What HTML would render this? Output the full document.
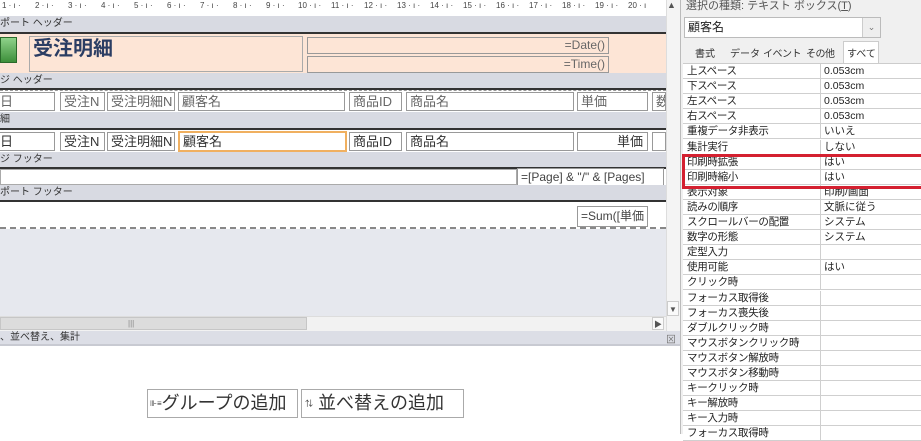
<!DOCTYPE html>
<html><head><meta charset="utf-8"><style>
*{margin:0;padding:0;box-sizing:border-box}
body{width:921px;height:434px;overflow:hidden;background:#fff;font-family:"Liberation Sans","Noto Sans CJK JP",sans-serif;position:relative;color:#333}
.a{position:absolute}
.bar{position:absolute;left:0;width:666px;height:16px;background:#d8dae2;font-size:10px;color:#333;line-height:15px;padding-left:0;border-bottom:2px solid #333}
.box{position:absolute;border:1px solid #999;background:#fff;font-size:13px;color:#666;line-height:18px;padding-left:3px;white-space:nowrap;overflow:hidden}
.d{color:#333}
.row{position:absolute;left:683px;width:238px;height:15.1px;border-bottom:1px solid #cfcfcf;font-size:10.5px;line-height:14px;color:#222;background:#fff;white-space:nowrap}
.row span{position:absolute;left:4px;letter-spacing:-0.3px}
.row b{position:absolute;left:137px;font-weight:normal;border-left:1px solid #cfcfcf;height:15px;padding-left:3px;top:0}
.r{position:absolute;top:0;font-size:8px;color:#444;line-height:11px}
</style></head><body>
<!-- ruler -->
<div class="a" style="left:0;top:0;width:666px;height:14px;background:#fff">
<span class="r" style="left:2px">1 · ı ·</span><span class="r" style="left:35px">2 · ı ·</span><span class="r" style="left:68px">3 · ı ·</span><span class="r" style="left:101px">4 · ı ·</span><span class="r" style="left:134px">5 · ı ·</span><span class="r" style="left:167px">6 · ı ·</span><span class="r" style="left:200px">7 · ı ·</span><span class="r" style="left:233px">8 · ı ·</span><span class="r" style="left:266px">9 · ı ·</span><span class="r" style="left:298px">10 · ı ·</span><span class="r" style="left:331px">11 · ı ·</span><span class="r" style="left:364px">12 · ı ·</span><span class="r" style="left:397px">13 · ı ·</span><span class="r" style="left:430px">14 · ı ·</span><span class="r" style="left:463px">15 · ı ·</span><span class="r" style="left:496px">16 · ı ·</span><span class="r" style="left:529px">17 · ı ·</span><span class="r" style="left:562px">18 · ı ·</span><span class="r" style="left:595px">19 · ı ·</span><span class="r" style="left:628px">20 · ı</span>
</div>
<!-- sections -->
<div class="bar" style="top:16px;height:18px">ポート ヘッダー</div>
<div class="a" style="left:0;top:34px;width:666px;height:39px;background:#fde5d6"></div>
<div class="a" style="left:0;top:37px;width:17px;height:26px;background:linear-gradient(#8fd28a,#3d8f3a);border:1px solid #2a6a2a"></div>
<div class="box" style="left:29px;top:36px;width:274px;height:36px;background:#fde5d6;font-size:20px;line-height:24px;color:#2b3d63;font-weight:bold;border-color:#aaa">受注明細</div>
<div class="box" style="left:307px;top:37px;width:302px;height:17px;background:#fde5d6;text-align:right;padding-right:3px;line-height:15px;font-size:12px">=Date()</div>
<div class="box" style="left:307px;top:56px;width:302px;height:17px;background:#fde5d6;text-align:right;padding-right:3px;line-height:15px;font-size:12px">=Time()</div>
<div class="bar" style="top:73px;height:17px">ジ ヘッダー</div>
<div class="a" style="left:0;top:90px;width:666px;height:22px;background:#fff;border-top:1px dashed #999"></div>
<div class="box" style="left:-4px;top:92px;width:59px;height:19px">日</div>
<div class="box" style="left:60px;top:92px;width:45px;height:19px">受注N</div>
<div class="box" style="left:107px;top:92px;width:68px;height:19px">受注明細N</div>
<div class="box" style="left:178px;top:92px;width:167px;height:19px">顧客名</div>
<div class="box" style="left:349px;top:92px;width:53px;height:19px">商品ID</div>
<div class="box" style="left:406px;top:92px;width:168px;height:19px">商品名</div>
<div class="box" style="left:577px;top:92px;width:71px;height:19px">単価</div>
<div class="box" style="left:652px;top:92px;width:14px;height:19px">数</div>
<div class="bar" style="top:112px;height:18px">細</div>
<div class="a" style="left:0;top:130px;width:666px;height:23px;background:#fff"></div>
<div class="box d" style="left:-4px;top:132px;width:59px;height:19px">日</div>
<div class="box d" style="left:60px;top:132px;width:45px;height:19px">受注N</div>
<div class="box d" style="left:107px;top:132px;width:68px;height:19px">受注明細N</div>
<div class="box d" style="left:178px;top:131px;width:169px;height:21px;border:2px solid #f0b060">顧客名</div>
<div class="box d" style="left:349px;top:132px;width:53px;height:19px">商品ID</div>
<div class="box d" style="left:406px;top:132px;width:168px;height:19px">商品名</div>
<div class="box d" style="left:577px;top:132px;width:71px;height:19px;text-align:right;padding-right:4px">単価</div>
<div class="box d" style="left:652px;top:132px;width:14px;height:19px"></div>
<div class="bar" style="top:152px;height:17px">ジ フッター</div>
<div class="a" style="left:0;top:169px;width:666px;height:16px;background:#fff"></div>
<div class="box" style="left:0;top:169px;width:517px;height:16px;border-color:#aaa"></div>
<div class="box" style="left:517px;top:168px;width:147px;height:18px;font-size:12px;line-height:16px;color:#444">=[Page] &amp; "/" &amp; [Pages]</div>
<div class="bar" style="top:185px;height:17px">ポート フッター</div>
<div class="a" style="left:0;top:202px;width:666px;height:27px;background:#fff;border-bottom:2px dashed #888"></div>
<div class="box" style="left:577px;top:206px;width:71px;height:21px;font-size:12px;color:#444">=Sum([単価</div>
<div class="a" style="left:0;top:229px;width:666px;height:88px;background:#e6e8ee"></div>
<!-- h scrollbar -->
<div class="a" style="left:0;top:316px;width:666px;height:15px;background:#f2f2f2;border-top:1px solid #ddd"></div>
<div class="a" style="left:0;top:317px;width:307px;height:13px;background:#dcdcdc;border:1px solid #c6c6c6"></div>
<div class="a" style="left:128px;top:319px;font-size:8px;color:#888">|||</div>
<div class="a" style="left:652px;top:317px;width:12px;height:13px;font-size:8px;color:#555;line-height:13px;text-align:center;background:#fafafa;border:1px solid #ccc">▶</div>
<!-- v scrollbar -->
<div class="a" style="left:666px;top:0;width:14px;height:331px;background:#f4f4f4;border-left:1px solid #ddd"></div>
<div class="a" style="left:667px;top:0;font-size:9px;color:#555">▲</div>
<div class="a" style="left:667px;top:301px;width:12px;height:15px;font-size:8px;color:#555;line-height:15px;text-align:center;background:#fafafa;border:1px solid #ccc">▼</div>
<!-- sort pane -->
<div class="a" style="left:0;top:331px;width:680px;height:15px;background:#dcdee6;font-size:10px;line-height:14px;border-bottom:2px solid #c8cad2">、並べ替え、集計</div>
<div class="a" style="left:666px;top:331px;font-size:10px;color:#777">⊠</div>
<div class="a" style="left:147px;top:389px;width:151px;height:29px;border:1px solid #aaa;background:#fff;font-size:18px;line-height:27px;padding-left:2px;color:#333;white-space:nowrap;overflow:hidden"><span style="font-size:8px;vertical-align:3px">⊪≡</span>グループの追加</div>
<div class="a" style="left:301px;top:389px;width:163px;height:29px;border:1px solid #aaa;background:#fff;font-size:18px;line-height:27px;padding-left:3px;color:#333;white-space:nowrap;overflow:hidden"><span style="font-size:8px;vertical-align:3px">⇅</span> 並べ替えの追加</div>
<!-- property panel -->
<div class="a" style="left:680px;top:0;width:241px;height:434px;background:#f0f0f0;border-left:1px solid #bbb"></div>
<div class="a" style="left:686px;top:-3px;font-size:11px;color:#555">選択の種類: テキスト ボックス(<u>T</u>)</div>
<div class="a" style="left:684px;top:17px;width:197px;height:21px;background:#fff;border:1px solid #bbb;font-size:12px;line-height:19px;padding-left:3px;color:#222">顧客名</div>
<div class="a" style="left:862px;top:18px;width:18px;height:19px;background:#eee;border-left:1px solid #ccc;font-size:9px;color:#777;text-align:center;line-height:19px">⌄</div>
<div class="a" style="left:843px;top:41px;width:36px;height:23px;background:#fff;border:1px solid #ccc;border-bottom:none"></div>
<div class="a" style="left:695px;top:45px;font-size:10px;color:#333">書式</div>
<div class="a" style="left:730px;top:45px;font-size:10px;color:#333">データ</div>
<div class="a" style="left:763px;top:45px;font-size:10px;color:#333;letter-spacing:-0.5px">イベント</div>
<div class="a" style="left:806px;top:45px;font-size:10px;color:#333;letter-spacing:-0.5px">その他</div>
<div class="a" style="left:847px;top:45px;font-size:10px;color:#333">すべて</div>
<div class="a" style="left:683px;top:63px;width:238px;height:371px;background:#fff;border-top:1px solid #ccc"></div>
<div class="row" style="top:64px"><span>上スペース</span><b>0.053cm</b></div>
<div class="row" style="top:79.1px"><span>下スペース</span><b>0.053cm</b></div>
<div class="row" style="top:94.2px"><span>左スペース</span><b>0.053cm</b></div>
<div class="row" style="top:109.3px"><span>右スペース</span><b>0.053cm</b></div>
<div class="row" style="top:124.4px"><span>重複データ非表示</span><b>いいえ</b></div>
<div class="row" style="top:139.5px"><span>集計実行</span><b>しない</b></div>
<div class="row" style="top:154.6px"><span>印刷時拡張</span><b>はい</b></div>
<div class="row" style="top:169.7px"><span>印刷時縮小</span><b>はい</b></div>
<div class="row" style="top:184.8px"><span>表示対象</span><b>印刷/画面</b></div>
<div class="row" style="top:199.9px"><span>読みの順序</span><b>文脈に従う</b></div>
<div class="row" style="top:215px"><span>スクロールバーの配置</span><b>システム</b></div>
<div class="row" style="top:230.1px"><span>数字の形態</span><b>システム</b></div>
<div class="row" style="top:245.2px"><span>定型入力</span><b></b></div>
<div class="row" style="top:260.3px"><span>使用可能</span><b>はい</b></div>
<div class="row" style="top:275.4px"><span>クリック時</span><b></b></div>
<div class="row" style="top:290.5px"><span>フォーカス取得後</span><b></b></div>
<div class="row" style="top:305.6px"><span>フォーカス喪失後</span><b></b></div>
<div class="row" style="top:320.7px"><span>ダブルクリック時</span><b></b></div>
<div class="row" style="top:335.8px"><span>マウスボタンクリック時</span><b></b></div>
<div class="row" style="top:350.9px"><span>マウスボタン解放時</span><b></b></div>
<div class="row" style="top:366px"><span>マウスボタン移動時</span><b></b></div>
<div class="row" style="top:381.1px"><span>キークリック時</span><b></b></div>
<div class="row" style="top:396.2px"><span>キー解放時</span><b></b></div>
<div class="row" style="top:411.3px"><span>キー入力時</span><b></b></div>
<div class="row" style="top:426.4px"><span>フォーカス取得時</span><b></b></div>
<div class="a" style="left:682px;top:154px;width:245px;height:35px;border:3px solid #d42030"></div>
</body></html>
